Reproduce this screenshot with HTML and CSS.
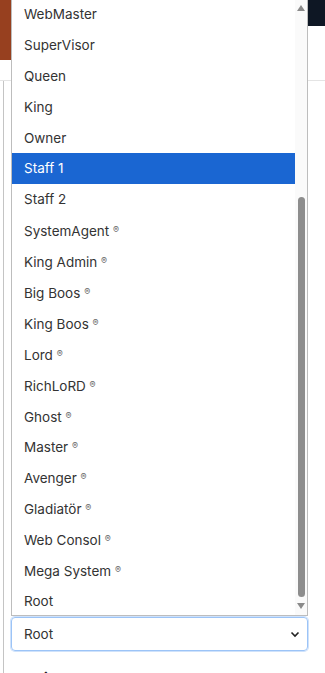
FILE: index.html
```html
<!DOCTYPE html>
<html lang="tr">
  <head>
    <meta charset="UTF-8" />
    <meta name="viewport" content="width=device-width, initial-scale=1.0" />
    <title>Yetki Seçimi</title>
    <link rel="stylesheet" href="styles.css">
  </head>
  <body>
    <!-- arka plandaki sayfa -->
    <header class="topbar">
      <div class="brand"></div>
      <div class="nav"></div>
    </header>

    <div class="content">
      <div class="select-box">
        <span>Root</span>
        <svg class="chevron" width="10" height="7" viewBox="0 0 10 7"><path d="M1.5 1.5 5 5l3.5-3.5" fill="none" stroke="#222" stroke-width="1.6"/></svg>
      </div>
      <h3 class="section-title">VERİLER</h3>
    </div>

    <!-- açık seçim listesi -->
    <div class="menu">
      <ul class="menu-list">
        <li>WebMaster</li>
        <li>SuperVisor</li>
        <li>Queen</li>
        <li>King</li>
        <li>Owner</li>
        <li class="selected">Staff 1</li>
        <li>Staff 2</li>
        <li>SystemAgent <span class="reg">®</span></li>
        <li>King Admin <span class="reg">®</span></li>
        <li>Big Boos <span class="reg">®</span></li>
        <li>King Boos <span class="reg">®</span></li>
        <li>Lord <span class="reg">®</span></li>
        <li>RichLoRD <span class="reg">®</span></li>
        <li>Ghost <span class="reg">®</span></li>
        <li>Master <span class="reg">®</span></li>
        <li>Avenger <span class="reg">®</span></li>
        <li>Gladiatör <span class="reg">®</span></li>
        <li>Web Consol <span class="reg">®</span></li>
        <li>Mega System <span class="reg">®</span></li>
        <li>Root</li>
      </ul>
      <div class="scrollbar">
        <span class="arrow-up"></span>
        <span class="thumb"></span>
        <span class="arrow-down"></span>
      </div>
    </div>
  </body>
</html>
```

FILE: styles.css
```css
body {
  margin: 0;
  height: 673px;
  overflow: hidden;
  position: relative;
  font-family: Inter, "Noto Sans", sans-serif;
  background-color: #fff;
  color: #333;
}

.topbar {
  display: flex;
  height: 80px;
  border-bottom: 1px solid #e4e4e4;
}

.brand {
  width: 11px;
  height: 60px;
  background-color: #97401f;
}

.nav {
  flex: 1;
  height: 26px;
  background-color: #0e1724;
}

.content {
  box-sizing: border-box;
  height: 592px;
  overflow: hidden;
  margin-left: 3px;
  padding: 536px 17px 0 7px;
  border-left: 1px solid #c4c4c4;
}

.select-box {
  display: flex;
  align-items: center;
  justify-content: space-between;
  height: 32px;
  padding: 0 7px 0 12px;
  border: 1px solid #9cc4f7;
  border-radius: 4px;
  box-shadow: 0 0 0 1px #cfe2fb;
  font-size: 13.5px;
}

.section-title {
  margin: 20px 0 0 1px;
  font-size: 15px;
  font-weight: 700;
  letter-spacing: 0.5px;
  color: #222;
}

/* menu */
.menu {
  position: absolute;
  top: -2px;
  left: 11px;
  width: 295px;
  height: 616px;
  display: flex;
  background-color: #fff;
  border: 1px solid #bdbdbd;
}

.menu-list {
  flex: 1;
  margin: 0;
  padding: 0;
  list-style: none;
  overflow: hidden;
}

.menu-list li {
  height: 30.9px;
  line-height: 30.9px;
  padding-left: 12px;
  font-size: 13.5px;
  white-space: nowrap;
}

.menu-list li.selected {
  background-color: #1a66d2;
  color: #fff;
}

.reg {
  font-size: 9px;
  color: #666;
  vertical-align: 3px;
}

.scrollbar {
  width: 12px;
  display: flex;
  flex-direction: column;
  align-items: center;
  background-color: #fafafa;
}

.arrow-up,
.arrow-down {
  width: 0;
  height: 0;
  border-left: 4px solid transparent;
  border-right: 4px solid transparent;
}

.arrow-up {
  margin-top: 6px;
  border-bottom: 6px solid #8a8a8a;
}

.thumb {
  margin-top: 186px;
  width: 7px;
  height: 400px;
  border-radius: 4px;
  background-color: #8d8d8d;
}

.arrow-down {
  margin-top: 6px;
  border-top: 6px solid #8a8a8a;
}
```
